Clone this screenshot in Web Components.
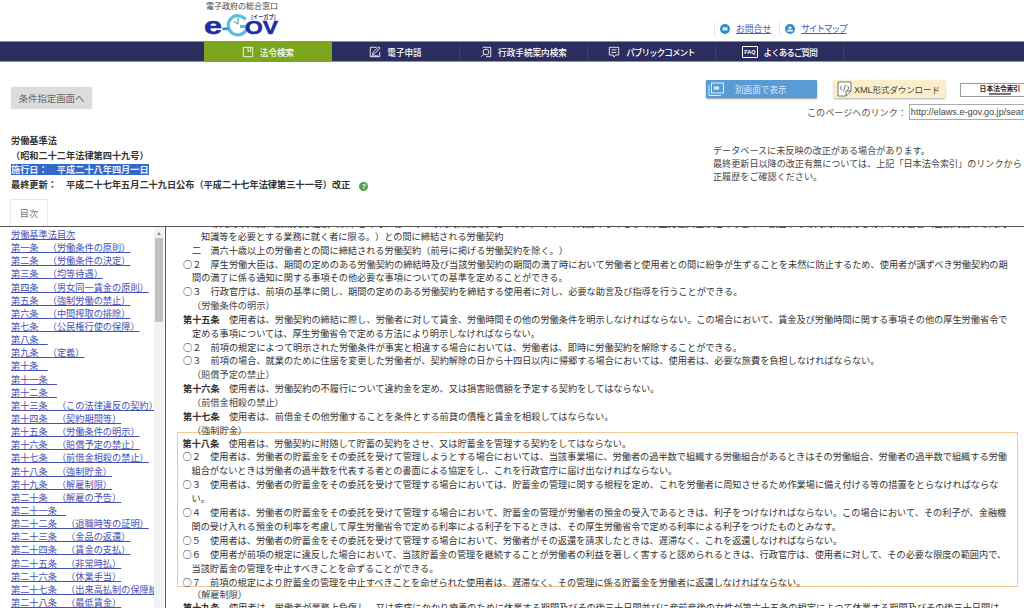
<!DOCTYPE html>
<html lang="ja"><head><meta charset="utf-8"><title>労働基準法</title>
<style>
html,body{margin:0;height:100%;overflow:hidden;background:#fff}
body{width:1024px;height:608px;font-family:"Noto Sans CJK JP","Liberation Sans",sans-serif;color:#333;font-size:9.18px;text-spacing-trim:space-all;display:flex;flex-direction:column}
</style></head><body>
<eg-header></eg-header>
<eg-nav>
<eg-tab active label="法令検索"><svg viewBox="0 0 14 14" width="12" height="12" fill="none" stroke="#fff" stroke-width="1"><path d="M1.5 1.5H12.5V12.5H1.5ZM7 1.5V6.5L8.7 5.2L10.2 6.5V1.5" /></svg></eg-tab>
<eg-tab label="電子申請"><svg viewBox="0 0 14 14" width="12" height="12" fill="none" stroke="#fff" stroke-width="1"><path d="M9 1.5H1.5V12.5H12.5V7M4 10L5 7L11.5 1L13 2.5L6.5 9ZM3 11.5H11"/></svg></eg-tab>
<eg-tab label="行政手続案内検索"><svg viewBox="0 0 14 14" width="12" height="12" fill="none" stroke="#fff" stroke-width="1"><path d="M3 1.5H12.5V12.5H7M1.5 12.5L4.5 9.5"/><circle cx="7" cy="7" r="3.4"/></svg></eg-tab>
<eg-tab narrow label="パブリックコメント"><svg viewBox="0 0 14 14" width="12" height="12" fill="none" stroke="#fff" stroke-width="1"><path d="M1.5 1.5H12.5V10.5H9L7 13L6 10.5H1.5ZM4 4.5H10M4 7.5H10"/></svg></eg-tab>
<eg-tab narrow label="よくあるご質問"><span style="font:700 5.5px 'Liberation Sans',sans-serif;border:1px solid #fff;border-radius:1px;padding:1px 1px;display:block;line-height:8px">FAQ</span></eg-tab>
</eg-nav>
<eg-top>
<law-meta slot="left"></law-meta>
<eg-tools slot="right"></eg-tools>
</eg-top>
<law-split>
<toc-list slot="toc"></toc-list>
<law-body slot="body"></law-body>
</law-split>
<script>
function def(name,html,setup){customElements.define(name,class extends HTMLElement{connectedCallback(){if(this.shadowRoot)return;const r=this.attachShadow({mode:'open'});r.innerHTML=typeof html==='function'?html(this):html;if(setup)setup(r,this)}})}

def('eg-header',`<style>
:host{display:flex;height:41px;flex:none}
.logo{margin-left:204px;width:80px;display:flex;flex-direction:column}
.t{font-size:8px;line-height:12px;color:#444;white-space:nowrap;padding-left:2px}
svg.l{display:block;margin-top:2px;overflow:visible}
.links{margin-left:430px;padding-top:22px;display:flex;align-items:flex-start;font-size:8.8px;line-height:13px;white-space:nowrap}
.sep{width:1px;height:14px;background:#e6e6e6}
a{color:#4a59b0;text-decoration:underline;display:flex;gap:6px;align-items:center;padding:0 8px 0 5px}
.nr{letter-spacing:-1.25px}
</style>
<div class="logo"><div class="t">電子政府の総合窓口</div>
<svg class="l" width="80" height="26" viewBox="0 0 80 26">
<path d="M41.5 5.5A9.6 9.6 0 1 0 42.5 15.5V12.5H36" fill="none" stroke="#58c0de" stroke-width="3.2"/>
<path d="M34 3.5V10L30 7.5" fill="none" stroke="#2f8cc8" stroke-width="1"/>
<text x="0" y="20" font-family="Liberation Sans" font-weight="700" font-size="23" textLength="18" lengthAdjust="spacingAndGlyphs" fill="#1c2f9e" stroke="#1c2f9e" stroke-width=".5">e</text>
<rect x="18.5" y="13.5" width="6" height="2.6" fill="#2f8cc8"/>
<text x="41" y="20" font-family="Liberation Sans" font-weight="700" font-size="18.5" textLength="33" lengthAdjust="spacingAndGlyphs" fill="#1c2f9e" stroke="#1c2f9e" stroke-width=".5">OV</text>
<text x="47" y="4.5" font-family="Noto Sans CJK JP" font-weight="700" font-size="5.2" fill="#27348b">[イーガブ]</text>
</svg></div>
<div class="links"><span class="sep"></span><a href="#"><svg width="10" height="10" viewBox="0 0 10 10"><circle cx="5" cy="5" r="5" fill="#2f8fc4"/><rect x="2.5" y="3.2" width="5" height="3.4" rx=".6" fill="#cfe8f5"/></svg><span>お問合せ</span></a><span class="sep"></span><a href="#"><svg width="10" height="10" viewBox="0 0 10 10"><circle cx="5" cy="5" r="5" fill="#2f8fc4"/><path d="M3.6 2.8h2.8v2H3.6zM2.2 7.6h5.6V5.8H2.2z" fill="#fff"/></svg><span class="nr">サイトマップ</span></a></div>`);

def('eg-nav',`<style>
:host{display:flex;flex:none;padding-left:204px;background:#2b2d5f;border-top:1px solid #8d8fb0;border-bottom:1px solid #8d8fb0;box-sizing:content-box;height:19px}
</style><slot></slot>`);

def('eg-tab',h=>`<style>
:host{display:flex;width:128px;box-sizing:border-box;align-items:center;justify-content:center;gap:6px;color:#fff;font-size:8.6px;font-weight:500;white-space:nowrap;border-right:1px solid #3c3e72;${h.hasAttribute('narrow')?'letter-spacing:-1px;':''}${h.hasAttribute('active')?'background:#7aa51d;border-right:0;margin:-1px 0;':''}}
svg,::slotted(*){flex:none;letter-spacing:0}
</style><slot></slot><span>${h.getAttribute('label')}</span>`);

def('eg-top',`<style>
:host{display:flex;height:164px;flex:none;overflow:hidden}
.a{width:706px;flex:none;padding-left:11px;box-sizing:border-box}
.b{flex:1;min-width:0}
</style><div class="a"><slot name="left"></slot></div><div class="b"><slot name="right"></slot></div>`);

def('law-meta',`<style>
:host{display:block;padding-top:25px}
.back{width:81px;height:22px;background:#dcdcdc;border-radius:2px;color:#666;font-size:9.4px;display:flex;align-items:center;justify-content:center;box-shadow:0 0 1px #ccc}
.m{margin:24px 0 6px;font-weight:700;line-height:14.7px;white-space:nowrap;color:#333}
.sel{background:#3468c9;color:#e8edf8;display:inline-block;line-height:11px}
.q{display:inline-block;width:9px;height:9px;border-radius:50%;background:#4ea24e;color:#fff;font:700 7px/9px "Liberation Sans",sans-serif;text-align:center;margin-left:9px;vertical-align:-1px}
.tab{margin-left:-1px;width:38px;height:28px;border:1px solid #e8e8e8;border-bottom:0;box-sizing:border-box;display:flex;align-items:center;justify-content:center;color:#777;margin-top:7px}
</style>
<div class="back">条件指定画面へ</div>
<div class="m"><div>労働基準法</div><div>（昭和二十二年法律第四十九号）</div><div><span class="sel">施行日：　平成二十八年四月一日</span></div><div>最終更新：　平成二十七年五月二十九日公布（平成二十七年法律第三十一号）改正<span class="q">?</span></div></div>
<div class="tab">目次</div>`);

def('eg-tools',`<style>
:host{display:block;padding-top:18px;white-space:nowrap}
.row{display:flex;align-items:flex-start;height:23px}
.blue{width:111px;height:18px;flex:none;background:#5a9bd6;color:#dceaf7;display:flex;align-items:center;box-shadow:0 1px 2px #999;border-radius:1px;padding-left:2px;box-sizing:border-box;font-size:8.6px}
.blue span{margin-left:11px}
.xml{margin-left:17px;width:111px;flex:none;height:18px;background:#fdeecb;color:#444;display:flex;align-items:center;gap:2px;box-shadow:0 1px 2px #aaa;padding-left:3px;box-sizing:border-box;font-size:8.5px;letter-spacing:-.1px}
.xml b{font:400 9.2px "Liberation Sans",sans-serif}
.idx{margin:3px 0 0 15px;width:80px;height:14px;border:1px solid #999;box-sizing:border-box;display:flex;flex-direction:column;align-items:center;font-size:6.8px;font-weight:700;line-height:9px;color:#222;flex:none}
.idx i{display:block;width:22px;height:1.5px;background:#777}
.link{display:flex;align-items:center;margin-left:101px;height:17px;color:#555;font-size:9.1px}
.inp{margin-left:2px;width:160px;height:16px;border:1px solid #aaa;box-sizing:border-box;font:9.1px/14px "Liberation Sans",sans-serif;color:#444;padding-left:1px;flex:none;overflow:hidden}
.note{margin:24px 0 0 7px;font-size:9.1px;line-height:13px;color:#444}
</style>
<div class="row"><div class="blue"><svg width="16" height="15" viewBox="0 0 16 15" fill="none" stroke="#dcefff"><path d="M1 3V13.5H13"/><rect x="3.5" y="1" width="12" height="10"/><rect x="6" y="4.5" width="5" height="3" fill="#dcefff" stroke="none"/></svg><span>別画面で表示</span></div>
<div class="xml"><svg width="15" height="16" viewBox="0 0 15 16" fill="#fff" stroke="#555" stroke-width=".8"><path d="M1 1H14V10L9 15H1Z"/><path d="M9 15V10H14" fill="none"/><path d="M5 4.5L3 7L5 9.5M10 4.5L12 7L10 9.5M8.3 3.5L6.7 10.5" fill="none"/></svg><span><b>XML</b>形式ダウンロード</span></div>
<div class="idx"><span>日本法令索引</span><i></i></div></div>
<div class="link"><span>このページへのリンク：</span><span class="inp">http://elaws.e-gov.go.jp/sear</span></div>
<div class="note"><div>データベースに未反映の改正がある場合があります。</div><div>最終更新日以降の改正有無については、上記「日本法令索引」のリンクから</div><div>正履歴をご確認ください。</div></div>`);

def('law-split',`<style>
:host{display:flex;flex:1;min-height:0;border-top:1px solid #555;overflow:hidden}
.toc{width:165px;flex:none;border-right:1px solid #555;overflow:hidden}
.body{flex:1;min-width:0;overflow:hidden}
</style><div class="toc"><slot name="toc"></slot></div><div class="body"><slot name="body"></slot></div>`);

const toc=['労働基準法目次','第一条　（労働条件の原則）','第二条　（労働条件の決定）','第三条　（均等待遇）','第四条　（男女同一賃金の原則）','第五条　（強制労働の禁止）','第六条　（中間搾取の排除）','第七条　（公民権行使の保障）','第八条　','第九条　（定義）','第十条　','第十一条　','第十二条　','第十三条　（この法律違反の契約）','第十四条　（契約期間等）','第十五条　（労働条件の明示）','第十六条　（賠償予定の禁止）','第十七条　（前借金相殺の禁止）','第十八条　（強制貯金）','第十九条　（解雇制限）','第二十条　（解雇の予告）','第二十一条　','第二十二条　（退職時等の証明）','第二十三条　（金品の返還）','第二十四条　（賃金の支払）','第二十五条　（非常時払）','第二十六条　（休業手当）','第二十七条　（出来高払制の保障給）','第二十八条　（最低賃金）'];
def('toc-list',`<style>
:host{display:flex;height:100%}
.l{width:154px;flex:none;padding:1px 0 0 11px;box-sizing:border-box;overflow:hidden;font-size:9.2px;line-height:13.14px;white-space:nowrap}
a{color:#4650b4;display:block;text-decoration:underline;text-decoration-thickness:.7px;text-underline-offset:1px;width:max-content;white-space:pre}
.sb{width:10px;flex:none;background:#f1f1f1;display:flex;flex-direction:column;align-items:center}
.up{width:0;height:0;border:2.5px solid transparent;border-bottom:3px solid #888;border-top:0;margin:5px 0 3px}
.th{width:8px;height:84px;background:#c1c1c1}
</style><div class="l">${toc.map(t=>`<a href="#">${t}</a>`).join('')}</div><div class="sb"><div class="up"></div><div class="th"></div></div>`);

const L=(c,t)=>`<div class="${c}">${t.replace(/^○(.)/,'<i class="o">○</i>$1')}</div>`;
const bodyTop=[['i1 first','一　専門的な知識、技術又は経験（以下この号において「専門的知識等」という。）であつて高度のものとして厚生労働大臣が定める基準に該当する専門的知識等を有する労働者（当該高度の専門的'],
['i3','知識等を必要とする業務に就く者に限る。）との間に締結される労働契約'],
['i1','二　満六十歳以上の労働者との間に締結される労働契約（前号に掲げる労働契約を除く。）'],
['p','○２　厚生労働大臣は、期間の定めのある労働契約の締結時及び当該労働契約の期間の満了時において労働者と使用者との間に紛争が生ずることを未然に防止するため、使用者が講ずべき労働契約の期'],
['i1','間の満了に係る通知に関する事項その他必要な事項についての基準を定めることができる。'],
['p','○３　行政官庁は、前項の基準に関し、期間の定めのある労働契約を締結する使用者に対し、必要な助言及び指導を行うことができる。'],
['h','（労働条件の明示）'],
['p b','<b>第十五条</b>　使用者は、労働契約の締結に際し、労働者に対して賃金、労働時間その他の労働条件を明示しなければならない。この場合において、賃金及び労働時間に関する事項その他の厚生労働省令で'],
['i1','定める事項については、厚生労働省令で定める方法により明示しなければならない。'],
['p','○２　前項の規定によつて明示された労働条件が事実と相違する場合においては、労働者は、即時に労働契約を解除することができる。'],
['p','○３　前項の場合、就業のために住居を変更した労働者が、契約解除の日から十四日以内に帰郷する場合においては、使用者は、必要な旅費を負担しなければならない。'],
['h','（賠償予定の禁止）'],
['p','<b>第十六条</b>　使用者は、労働契約の不履行について違約金を定め、又は損害賠償額を予定する契約をしてはならない。'],
['h','（前借金相殺の禁止）'],
['p','<b>第十七条</b>　使用者は、前借金その他労働することを条件とする前貸の債権と賃金を相殺してはならない。'],
['h','（強制貯金）']];
const boxed=[['p','<b>第十八条</b>　使用者は、労働契約に附随して貯蓄の契約をさせ、又は貯蓄金を管理する契約をしてはならない。'],
['p','○２　使用者は、労働者の貯蓄金をその委託を受けて管理しようとする場合においては、当該事業場に、労働者の過半数で組織する労働組合があるときはその労働組合、労働者の過半数で組織する労働'],
['i1','組合がないときは労働者の過半数を代表する者との書面による協定をし、これを行政官庁に届け出なければならない。'],
['p','○３　使用者は、労働者の貯蓄金をその委託を受けて管理する場合においては、貯蓄金の管理に関する規程を定め、これを労働者に周知させるため作業場に備え付ける等の措置をとらなければならな'],
['i1','い。'],
['p','○４　使用者は、労働者の貯蓄金をその委託を受けて管理する場合において、貯蓄金の管理が労働者の預金の受入であるときは、利子をつけなければならない。この場合において、その利子が、金融機'],
['i1','関の受け入れる預金の利率を考慮して厚生労働省令で定める利率による利子を下るときは、その厚生労働省令で定める利率による利子をつけたものとみなす。'],
['p','○５　使用者は、労働者の貯蓄金をその委託を受けて管理する場合において、労働者がその返還を請求したときは、遅滞なく、これを返還しなければならない。'],
['p','○６　使用者が前項の規定に違反した場合において、当該貯蓄金の管理を継続することが労働者の利益を著しく害すると認められるときは、行政官庁は、使用者に対して、その必要な限度の範囲内で、'],
['i1','当該貯蓄金の管理を中止すべきことを命ずることができる。'],
['p','○７　前項の規定により貯蓄金の管理を中止すべきことを命ぜられた使用者は、遅滞なく、その管理に係る貯蓄金を労働者に返還しなければならない。']];
const bodyEnd=[['h','（解雇制限）'],['p','<b>第十九条</b>　使用者は、労働者が業務上負傷し、又は疾病にかかり療養のために休業する期間及びその後三十日間並びに産前産後の女性が第六十五条の規定によつて休業する期間及びその後三十日間は、']];
const rows=a=>a.map(([c,t])=>L(c,t)).join('');
def('law-body',`<style>
:host{display:block;height:100%;overflow:hidden;padding-left:17px;color:#333;font-size:9.18px;line-height:13.85px;white-space:nowrap}
.in{margin-top:-10px}
.first{margin-bottom:-1px}
.p{padding-left:0}.i1{padding-left:9px}.i3{padding-left:18px}.h{padding-left:9px;color:#444}
b{font-weight:700}
.o{font-style:normal;font-weight:700;color:#2f3a5a}
.box{margin:-6px 6px 1px -6px;border:1.5px solid #f5c795;padding:4px 0 0 4.5px;height:155px;box-sizing:border-box;line-height:13.9px}
</style><div class="in">${rows(bodyTop)}<div class="box">${rows(boxed)}</div>${rows(bodyEnd)}</div>`);
</script>
</body></html>
